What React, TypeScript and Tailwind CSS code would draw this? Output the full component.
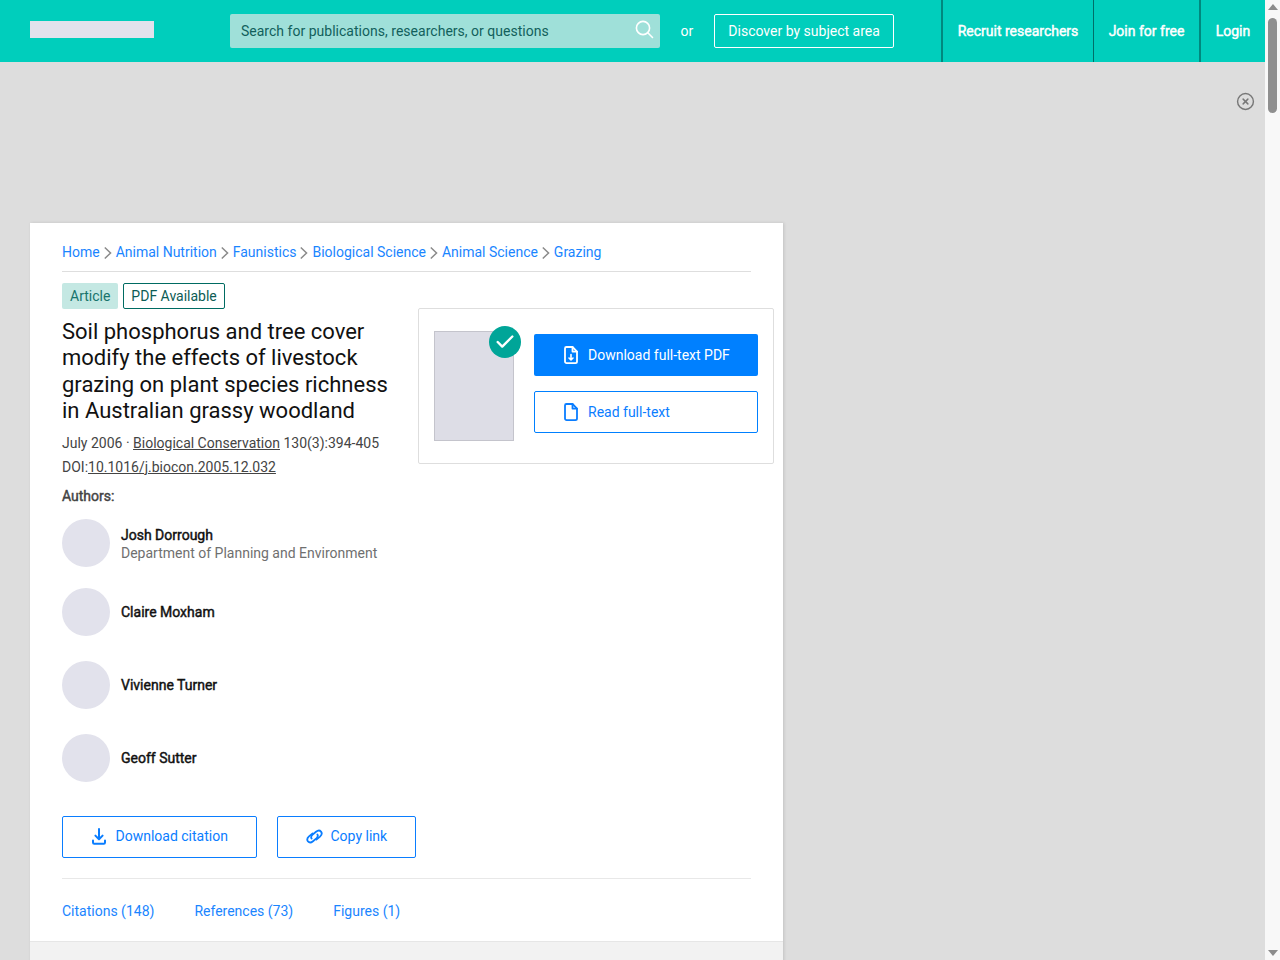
import { Check, CircleX } from "lucide-react";

const crumbs = ["Home", "Animal Nutrition", "Faunistics", "Biological Science", "Animal Science", "Grazing"];

const authors = [
  { name: "Josh Dorrough", dept: "Department of Planning and Environment", mt: "mt-[12px]" },
  { name: "Claire Moxham", mt: "mt-[21px]" },
  { name: "Vivienne Turner", mt: "mt-[25px]" },
  { name: "Geoff Sutter", mt: "mt-[25px]" },
];

const fauxBold = "font-normal [-webkit-text-stroke:0.45px_currentColor]";

function Chevron() {
  return (
    <svg width="15.95" height="16" viewBox="0 0 16 16" fill="none" stroke="#8a8a8a" strokeWidth="1.5">
      <path d="M4.8 2.5 10.6 8 4.8 13.5" />
    </svg>
  );
}

function SearchIcon() {
  return (
    <svg width="19" height="19" viewBox="0 0 19 19" fill="none" stroke="white" strokeWidth="1.6" strokeLinecap="round" className="mb-[4px]">
      <circle cx="8" cy="8" r="6.6" />
      <path d="M12.8 12.8 17.5 17.5" />
    </svg>
  );
}

function FileIcon({ arrow }: { arrow?: boolean }) {
  return (
    <svg width="14" height="18" viewBox="0 0 14 18" fill="none" stroke="currentColor" strokeWidth="1.8" strokeLinejoin="round" strokeLinecap="round">
      <path d="M2.4 1h6.1L13 5.6v9.900a1.600 1.600 0 0 1-1.600 1.600H2.600A1.600 1.600 0 0 1 1 15.500V2.400A1.400 1.400 0 0 1 2.400 1Z" />
      <path d="M8.500 1v4.600H13" />
      {arrow && <path d="M7 8.500v5M5 12 7 14 9 12" strokeWidth="1.600" />}
    </svg>
  );
}

function DownloadIcon() {
  return (
    <svg width="14" height="17" viewBox="0 0 14 17" fill="none" stroke="currentColor" strokeWidth="2" strokeLinecap="round" strokeLinejoin="round">
      <path d="M7 1v10M3.400 7.600 7 11.200l3.600-3.600" />
      <path d="M1 12.500V14.500a1.200 1.200 0 0 0 1.200 1.200h9.600a1.200 1.200 0 0 0 1.200-1.200V12.500" />
    </svg>
  );
}

function ChainIcon() {
  return (
    <svg width="17" height="15" viewBox="0 0 17 15" fill="none" stroke="currentColor" strokeWidth="1.800" strokeLinecap="round">
      <path d="M6.600 4.400 3 7.400C1.200 9 0.900 11 2 12.400c1.200 1.400 3.200 1.300 5-0.200l3.600-3.100c1.300-1.200 1.500-2.600 0.800-3.700" />
      <path d="M10.400 10.600 14 7.600c1.800-1.600 2.100-3.600 1-5C13.800 1.200 11.800 1.300 10 2.800L6.400 5.900c-1.300 1.200-1.500 2.600-0.800 3.700" />
    </svg>
  );
}

function Scrollbar() {
  return (
    <div className="flex h-full w-[15px] shrink-0 flex-col items-center bg-[#f8f8f8]">
      <div className="mt-[4px] h-0 w-0 border-x-[5px] border-b-[6px] border-x-transparent border-b-[#8c8c8c]" />
      <div className="mt-[8px] h-[95px] w-[9px] rounded-[5px] bg-[#8f8f8f]" />
      <div className="mt-auto mb-[4px] h-0 w-0 border-x-[5px] border-t-[6px] border-x-transparent border-t-[#8c8c8c]" />
    </div>
  );
}

function Header() {
  return (
    <header className="flex h-[62px] items-stretch bg-[#00cebc] pl-[30px] text-[14px] text-white">
      <div className="mt-[21px] h-[17px] w-[124px] bg-[#e2e2ec]" />
      <div className="mt-[14px] ml-[76px] flex h-[34px] w-[431px] items-center justify-between rounded-[2px] bg-[#9fe0d9] pl-[11px] pr-[6px] text-[#12605c]">
        <span className="tracking-[0.02px]">Search for publications, researchers, or questions</span>
        <SearchIcon />
      </div>
      <span className="ml-[20px] self-center">or</span>
      <div className="mt-[14px] ml-[21px] flex h-[34px] w-[180px] items-center justify-center rounded-[2px] border border-white">
        Discover by subject area
      </div>
      <nav className={`ml-[47px] flex ${fauxBold}`}>
        <a className="flex w-[152px] items-center justify-center border-l-2 border-[#00887e]">Recruit researchers</a>
        <a className="flex w-[106px] items-center justify-center border-l border-[#006f68]">Join for free</a>
        <a className="flex w-[66px] items-center justify-center border-l-2 border-[#00887e]">Login</a>
      </nav>
    </header>
  );
}

export default function App() {
  return (
    <div className="flex h-[960px] overflow-hidden bg-[#dddddd] font-['Roboto',sans-serif] text-[14px]">
      <div className="min-w-0 flex-1">
        <Header />
        <div className="flex h-[161px] justify-end pt-[30px] pr-[10px]">
          <CircleX size={19} strokeWidth={1.8} className="text-[#777777]" />
        </div>
        <main className="ml-[30px] w-[753px] bg-white shadow-[1px_0_3px_rgba(0,0,0,0.12)]">
          <div className="px-[32px] pt-[20px]">
            <div className="flex h-[19px] w-[689px] items-center text-[#1a85ff]">
              {crumbs.map((c, i) => (
                <span key={c} className="flex items-center">
                  {i > 0 && <Chevron />}
                  {c}
                </span>
              ))}
            </div>
            <div className="mt-[9px] h-px w-[689px] bg-[#dedede]" />
            <div className="flex w-[712px]">
              <div className="w-[356px] shrink-0">
                <div className="mt-[11px] flex gap-[5px]">
                  <span className="flex h-[26px] items-center rounded-[2px] bg-[#c4e8e3] px-[8px] text-[#17746c]">Article</span>
                  <span className="flex h-[26px] items-center rounded-[2px] border border-[#006b62] px-[7px] text-[#0c5c55]">PDF Available</span>
                </div>
                <h1 className="mt-[10px] w-[340px] text-[22px] leading-[26.4px] text-[#111111]">
                  Soil phosphorus and tree cover modify the effects of livestock grazing on plant species richness in Australian grassy woodland
                </h1>
                <p className="mt-[6px] leading-[24px] text-[#444444]">
                  July 2006 · <span className="underline">Biological Conservation</span> 130(3):394-405
                  <br />
                  DOI:<span className="underline">10.1016/j.biocon.2005.12.032</span>
                </p>
                <p className={`mt-[7px] text-[#444444] ${fauxBold}`}>Authors:</p>
                <div className="mb-[34px]">
                  {authors.map((a) => (
                    <div key={a.name} className={`flex items-center ${a.mt}`}>
                      <div className="h-[48px] w-[48px] shrink-0 rounded-full bg-[#e2e2ec]" />
                      <div className={`ml-[11px] leading-[18px] ${a.dept ? "pt-[2px]" : ""}`}>
                        <div className={`text-[#111111] ${fauxBold}`}>{a.name}</div>
                        {a.dept && <div className="text-[#6f6f6f]">{a.dept}</div>}
                      </div>
                    </div>
                  ))}
                </div>
              </div>
              <aside className="mt-[36px] flex h-[156px] w-[356px] shrink-0 rounded-[2px] border border-[#dedede] pt-[22px] pl-[15px]">
                <div className="relative h-[110px] w-[80px] shrink-0 border border-[#c4c4cc] bg-[#dddde6]">
                  <div className="absolute -top-[6px] -right-[8px] flex h-[32px] w-[32px] items-center justify-center rounded-full bg-[#00a598] text-white">
                    <Check size={22} strokeWidth={2.6} />
                  </div>
                </div>
                <div className="mt-[3px] ml-[20px] flex w-[224px] flex-col gap-[15px]">
                  <a className="flex h-[42px] items-center rounded-[2px] bg-[#0080ff] pl-[30px] text-white">
                    <FileIcon arrow />
                    <span className="ml-[10px]">Download full-text PDF</span>
                  </a>
                  <a className="flex h-[42px] items-center rounded-[2px] border border-[#0080ff] pl-[29px] text-[#0a7dff]">
                    <FileIcon />
                    <span className="ml-[10px]">Read full-text</span>
                  </a>
                </div>
              </aside>
            </div>
            <div className="flex gap-[20px] text-[#0a7dff]">
              <a className="flex h-[42px] w-[195px] items-center rounded-[2px] border border-[#0a7dff] pl-[29px]">
                <DownloadIcon />
                <span className="ml-[9.5px]">Download citation</span>
              </a>
              <a className="flex h-[42px] w-[139px] items-center rounded-[2px] border border-[#0a7dff] pl-[28px]">
                <ChainIcon />
                <span className="ml-[7.5px]">Copy link</span>
              </a>
            </div>
            <div className="mt-[20px] h-px w-[689px] bg-[#e8e8e8]" />
            <div className="flex h-[62px] items-center gap-[40px] pt-[4px] text-[#1a85ff]">
              <span>Citations (148)</span>
              <span>References (73)</span>
              <span>Figures (1)</span>
            </div>
          </div>
          <div className="h-[40px] border-t border-[#e6e6e6] bg-[#f2f2f2]" />
        </main>
      </div>
      <Scrollbar />
    </div>
  );
}
